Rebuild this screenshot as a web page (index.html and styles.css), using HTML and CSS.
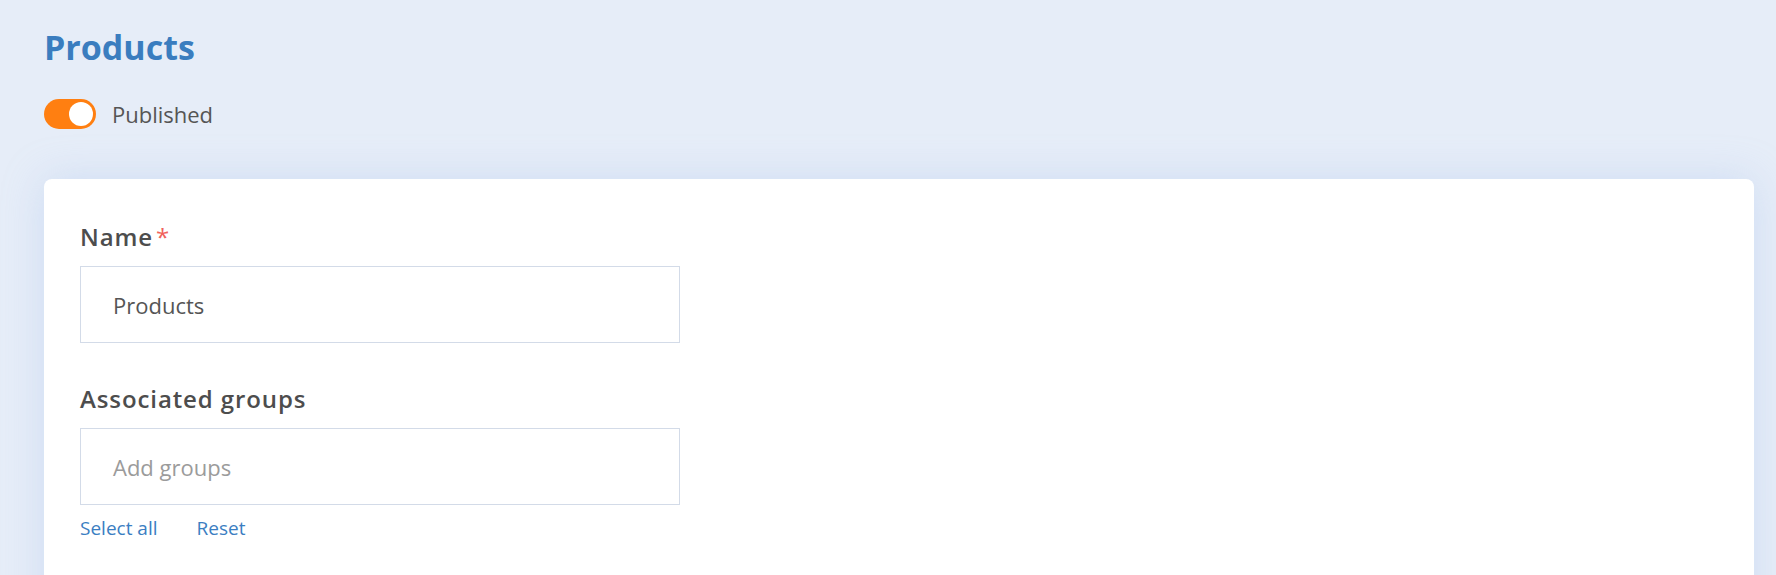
FILE: index.html
```html
<!DOCTYPE html>
<html lang="en">
<head>
  <meta charset="UTF-8" />
  <meta name="viewport" content="width=device-width, initial-scale=1" />
  <title>Products</title>
  <link rel="stylesheet" href="styles.css">
</head>
<body>

<div class="page">
  <h1 class="title">Products</h1>

  <div class="status">
    <span class="toggle on"><span class="knob"></span></span>
    <span class="status-label">Published</span>
  </div>

  <div class="card">
    <div class="field">
      <label class="label">Name<span class="req">*</span></label>
      <div class="input">Products</div>
    </div>

    <div class="field">
      <label class="label">Associated groups</label>
      <div class="input placeholder">Add groups</div>
      <div class="links">
        <a href="#">Select all</a>
        <a href="#">Reset</a>
      </div>
    </div>
  </div>
</div>

</body>
</html>
```

FILE: styles.css
```css
html, body {
  margin: 0;
  padding: 0;
  background: #e6edf8;
  height: 100%;
  overflow: hidden;
}
body {
  font-family: 'Open Sans', Lato, sans-serif;
  color: #4d4d4d;
}
.page {
  padding: 25px 22px 0 44px;
}
.title {
  margin: 0;
  font-size: 34px;
  line-height: 44px;
  font-weight: 700;
  color: #3a7dbf;
}
.status {
  display: flex;
  align-items: center;
  gap: 16px;
  margin-top: 30px;
}
.toggle {
  width: 52px;
  height: 30px;
  border-radius: 15px;
  background: #c9d2df;
  position: relative;
  box-sizing: border-box;
}
.toggle.on {
  background: #ff7f11;
}
.knob {
  position: absolute;
  top: 3px;
  right: 3px;
  width: 24px;
  height: 24px;
  border-radius: 50%;
  background: #fff;
}
.status-label {
  font-size: 22px;
  color: #555;
}
.card {
  margin-top: 50px;
  background: #fff;
  border-radius: 8px;
  box-shadow: 0 0 40px rgba(160, 190, 235, 0.35);
  padding: 43px 36px 60px;
  height: 500px;
}
.field + .field {
  margin-top: 41px;
}
.label {
  display: block;
  font-size: 24px;
  font-weight: 600;
  letter-spacing: 0.9px;
  line-height: 30px;
  color: #4d4d4d;
}
.req {
  color: #f0625a;
  margin-left: 3px;
  font-weight: 400;
}
.input {
  margin-top: 14px;
  width: 600px;
  height: 77px;
  box-sizing: border-box;
  border: 1.5px solid #d3dbe8;
  padding: 0 32px;
  display: flex;
  align-items: center;
  font-size: 22px;
  color: #555;
}
.input.placeholder {
  color: #9b9b9b;
}
.links {
  display: flex;
  gap: 39px;
  margin-top: 10px;
}
.links a {
  font-size: 19px;
  color: #3b7ec2;
  text-decoration: none;
}
```
